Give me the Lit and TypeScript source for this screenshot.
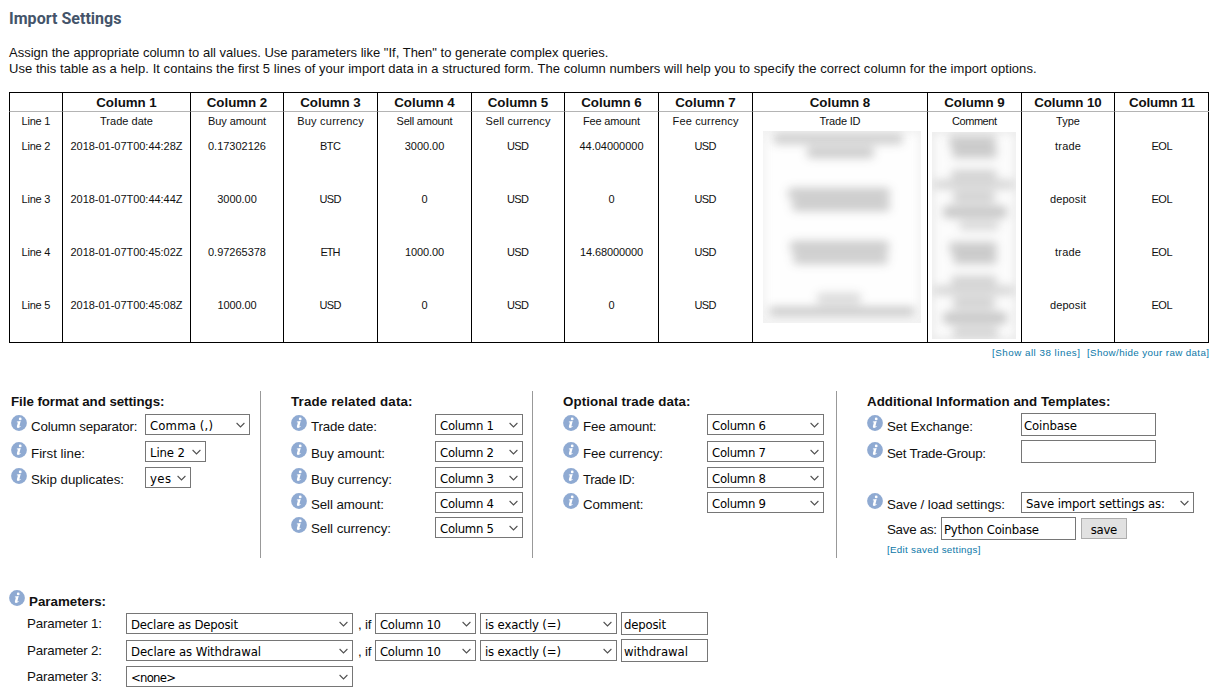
import { LitElement, html, css, svg } from "lit";
import { customElement, property, state } from "lit/decorators.js";
import { styleMap } from "lit/directives/style-map.js";

/* Single line of text tracked so that it occupies a given width. */
@customElement("fit-text")
class FitText extends LitElement {
  static styles = css`
    :host { display: inline-block; white-space: pre; flex: none; }
    .t { display: inline-block; }
  `;
  @property() text = "";
  @property({ type: Number }) w = 0;
  @state() spacing = 0;

  firstUpdated() {
    const span = this.renderRoot.querySelector(".t") as HTMLElement;
    const natural = span.getBoundingClientRect().width;
    if (this.w && this.text.length > 1) {
      this.spacing = (this.w + 1 - natural) / (this.text.length - 1);
    }
  }

  render() {
    const s = this.spacing.toFixed(3);
    return html`<span class="t" style=${styleMap({ letterSpacing: `${s}px`, marginRight: `${-Number(s)}px` })}>${this.text}</span>`;
  }
}

const t = (text: string, w: number) => html`<fit-text .text=${text} .w=${w}></fit-text>`;

@customElement("info-icon")
class InfoIcon extends LitElement {
  static styles = css`
    :host { display: block; width: 16px; height: 16px; flex: none; }
    svg { display: block; }
  `;
  render() {
    return html`<svg width="16" height="16" viewBox="0 0 16 16">
      <circle cx="8" cy="8" r="7.9" fill="#8faad2" />
      <circle cx="9.2" cy="3.9" r="1.4" fill="#fff" />
      <path d="M5.9 6.5 L9.7 6 L8.4 11.2 Q8.3 11.8 9.5 11.1 L9.8 11.6 Q8.3 13.1 7 13 Q5.5 12.8 5.9 11.2 L6.9 7.4 L5.8 7.2 Z" fill="#fff" />
    </svg>`;
  }
}

@customElement("select-box")
class SelectBox extends LitElement {
  static styles = css`
    :host { display: block; flex: none; }
    .box {
      box-sizing: border-box; height: 21px; border: 1px solid #767676; background: #fff;
      display: flex; justify-content: space-between; padding: 0 4px 0 4px;
      font: 13px/21px "DejaVu Sans Condensed", "DejaVu Sans", sans-serif; font-stretch: condensed; color: #000;
    }
    svg { display: block; margin-top: 7px; flex: none; }
  `;
  @property({ type: Number }) width = 100;
  @property() text = "";
  @property({ type: Number }) tw = 0;
  render() {
    return html`<div class="box" style=${styleMap({ width: `${this.width}px` })}>
      ${t(this.text, this.tw)}
      <svg width="9" height="7" viewBox="0 0 9 7"><path d="M0.6 1 L4.5 4.9 L8.4 1" fill="none" stroke="#505050" stroke-width="1.1" /></svg>
    </div>`;
  }
}

@customElement("text-box")
class TextBox extends LitElement {
  static styles = css`
    :host { display: block; flex: none; }
    .box {
      box-sizing: border-box; height: 23px; border: 1px solid #767676; background: #fff; padding-left: 2px;
      font: 13px/23px "DejaVu Sans Condensed", "DejaVu Sans", sans-serif; font-stretch: condensed; color: #000;
    }
  `;
  @property({ type: Number }) width = 100;
  @property() text = "";
  @property({ type: Number }) tw = 0;
  render() {
    return html`<div class="box" style=${styleMap({ width: `${this.width}px` })}>${this.text ? t(this.text, this.tw) : ""}</div>`;
  }
}

const sel = (text: string, tw: number, width: number) =>
  html`<select-box .text=${text} .tw=${tw} .width=${width}></select-box>`;
const inp = (text: string, tw: number, width: number) =>
  html`<text-box .text=${text} .tw=${tw} .width=${width}></text-box>`;

type Cell = [string, number];
const heads: Cell[] = [["", 0], ...Array.from({ length: 11 }, (_, i) => [`Column ${i + 1}`, i < 9 ? 59.5 : i === 9 ? 66.5 : 65] as Cell)];
const date = 111, eol: Cell = ["EOL", 20], usd: Cell = ["USD", 21], none: Cell = ["", 0], zero: Cell = ["0", 6];
const rows: Cell[][] = [
  [["Line 1", 28], ["Trade date", 52], ["Buy amount", 57], ["Buy currency", 65.5], ["Sell amount", 55], ["Sell currency", 64], ["Fee amount", 56], ["Fee currency", 65], ["Trade ID", 40], ["Comment", 44], ["Type", 23], none],
  [["Line 2", 28], ["2018-01-07T00:44:28Z", date], ["0.17302126", 57], ["BTC", 20], ["3000.00", 38.5], usd, ["44.04000000", 63], usd, none, none, ["trade", 25], eol],
  [["Line 3", 28], ["2018-01-07T00:44:44Z", date], ["3000.00", 38.5], usd, zero, usd, zero, usd, none, none, ["deposit", 35], eol],
  [["Line 4", 28], ["2018-01-07T00:45:02Z", date], ["0.97265378", 57], ["ETH", 19], ["1000.00", 38], usd, ["14.68000000", 62], usd, none, none, ["trade", 25], eol],
  [["Line 5", 28], ["2018-01-07T00:45:08Z", date], ["1000.00", 38], usd, zero, usd, zero, usd, none, none, ["deposit", 35], eol],
];

/* Redacted bars: x, y, width, height, opacity. */
const idBars = [[10, 3, 130, 10, .22], [44, 16, 67, 11, .23], [25, 57, 102, 11, .23], [29, 69, 98, 11, .23], [27, 110, 99, 11, .23], [30, 122, 95, 11, .22], [54, 162, 44, 11, .16], [6, 176, 146, 9, .25]];
const noteBars = [[17, 4, 47, 11, .22], [20, 15, 45, 11, .22], [19, 38, 46, 9, .2], [2, 48, 80, 9, .18], [21, 59, 42, 12, .19], [11, 74, 64, 12, .24], [27, 89, 40, 9, .17], [17, 110, 48, 11, .22], [21, 121, 44, 11, .22], [19, 144, 46, 9, .2], [2, 154, 80, 9, .18], [21, 165, 42, 12, .19], [11, 180, 64, 12, .24], [21, 195, 45, 10, .19]];
const bars = (list: number[][]) => list.map(([x, y, w, h, o]) => svg`<rect x=${x} y=${y} width=${w} height=${h} rx="4" fill="#222" opacity=${o} />`);

@customElement("app-root")
class AppRoot extends LitElement {
  static styles = css`
    :host { display: block; width: 1220px; height: 700px; overflow: hidden; background: #fff; color: #111;
      font: 13.33px/16px "Liberation Sans", Arial, sans-serif; }
    * { box-sizing: border-box; }
    .page { padding: 9px 0 0 9px; width: 1220px; }
    h1 { margin: 0; font: bold 16px/19px Roboto, sans-serif; color: #44546a; }
    .intro { margin-top: 17px; font-size: 13px; }
    .intro div { height: 16px; }
    .table { margin-top: 15px; width: 1200px; height: 251px; display: grid;
      grid-template-columns: 53px 128px 93px 94px 94px 93px 94px 94px 175px 94px 93px 95px;
      grid-template-rows: 19px 19px 53px 53px 53px 52px; border: 1px solid #000; border-left: 0; font-size: 11px; line-height: 13px; }
    .cell { border-left: 1px solid #000; text-align: center; padding-top: 9px; }
    .cell.first { padding-top: 3px; }
    .cell.head { padding-top: 1px; font: bold 13.33px/17px "Liberation Sans", Arial, sans-serif; border-bottom: 1px solid #b4b4b4; }
    .c1 { grid-column: 1; } .c2 { grid-column: 2; } .c3 { grid-column: 3; } .c4 { grid-column: 4; }
    .c5 { grid-column: 5; } .c6 { grid-column: 6; } .c7 { grid-column: 7; } .c8 { grid-column: 8; }
    .c9 { grid-column: 9; } .c10 { grid-column: 10; } .c11 { grid-column: 11; } .c12 { grid-column: 12; }
    .g1 { grid-row: 1; } .g2 { grid-row: 2; } .g3 { grid-row: 3; } .g4 { grid-row: 4; } .g5 { grid-row: 5; } .g6 { grid-row: 6; }
    .mask { display: block; align-self: start; }
    .mask.id { grid-area: 3 / 9 / 7 / 10; margin-left: 11px; }
    .mask.note { grid-area: 3 / 10 / 7 / 11; margin: 1px 0 0 5px; }
    .links { display: flex; justify-content: flex-end; gap: 7px; width: 1200px; margin-top: 4px; height: 12px; }
    .link { font-size: 9.8px; line-height: 12px; color: #0b78a8; }
    .panels { display: flex; margin-top: 32px; height: 167px; }
    .panel { border-right: 1px solid #999; padding: 2px 0 0 2px; width: 252px; }
    .panel.b { width: 272px; padding-left: 30px; }
    .panel.c { width: 304px; padding-left: 30px; }
    .panel.d { width: 372px; padding-left: 30px; border: 0; }
    .title { font-weight: bold; height: 21px; padding-top: 1px; }
    .row { display: flex; align-items: flex-start; height: 26px; }
    .row.r0 { height: 27px; }
    .row.r2, .row.r3 { height: 25px; }
    .row info-icon { margin-top: 1px; }
    .row.r4 info-icon { margin-top: 0; }
    .label { width: 114px; margin: 5px 0 0 4px; }
    .r4 .label { margin-top: 4px; }
    .b .label, .c .label { width: 124px; }
    .d .label { width: 134px; }
    .row text-box { margin-top: -1px; }
    .gap { height: 25px; }
    .saveas { display: flex; padding-left: 20px; height: 25px; }
    .saveas .cap { width: 54px; padding-top: 5px; }
    .saveas text-box { margin-right: 5px; }
    button { display: block; margin: 1px 0 0; padding: 0; width: 46px; height: 21px; border: 1px solid #adadad; background: #e1e1e1; color: #000;
      font: 13px/19px "DejaVu Sans Condensed", "DejaVu Sans", sans-serif; font-stretch: condensed; }
    button fit-text { padding-top: 1px; }
    .edit { padding: 2px 0 0 20px; height: 14px; }
    .ptitle { display: flex; gap: 4px; margin-top: 32px; height: 22px; font-weight: bold; }
    .ptitle fit-text { margin-top: 4px; }
    .prow { display: flex; align-items: flex-start; height: 27px; padding-left: 18px; }
    .prow.p1 { height: 26px; }
    .prow .name { width: 99px; margin-top: 4px; }
    .prow select-box { margin-top: 1px; }
    .iff { width: 22px; padding: 5px 0 0 5px; }
    .sp { width: 4px; }
  `;

  row(i: number, label: string, lw: number, control: unknown) {
    return html`<div class="row r${i}"><info-icon></info-icon><div class="label">${t(label, lw)}</div>${control}</div>`;
  }

  param(i: number, action: string, aw: number, value = "", vw = 0) {
    return html`<div class="prow p${i}">
      <div class="name">${t(`Parameter ${i + 1}:`, 74)}</div>${sel(action, aw, 227)}
      ${value ? html`<div class="iff">${t(", if", 12.5)}</div>${sel("Column 10", 60, 101)}<div class="sp"></div>
        ${sel("is exactly (=)", 75, 137)}<div class="sp"></div>${inp(value, vw, 87)}` : ""}
    </div>`;
  }

  render() {
    return html`<div class="page">
      <h1>${t("Import Settings", 111.5)}</h1>
      <div class="intro">
        <div>${t('Assign the appropriate column to all values. Use parameters like "If, Then" to generate complex queries.', 598.5)}</div>
        <div>${t("Use this table as a help. It contains the first 5 lines of your import data in a structured form. The column numbers will help you to specify the correct column for the import options.", 1026.5)}</div>
      </div>
      <div class="table">
        ${heads.map(([s, w], c) => html`<div class="cell head g1 c${c + 1}">${s ? t(s, w) : ""}</div>`)}
        ${rows.map((r, i) => r.map(([s, w], c) => html`<div class="cell ${i === 0 ? "first" : ""} g${i + 2} c${c + 1}">${s ? t(s, w) : ""}</div>`))}
        <svg class="mask id" width="158" height="192">
          <defs>
            <filter id="b1" x="-20%" y="-20%" width="140%" height="140%" color-interpolation-filters="sRGB"><feGaussianBlur stdDeviation="5" /></filter>
          </defs>
          <rect width="158" height="192" fill="#fefefe" />
          <rect x="-2" y="-2" width="162" height="196" fill="none" stroke="#888" stroke-width="6" opacity=".16" filter="url(#b1)" />
          <g filter="url(#b1)">${bars(idBars)}</g>
        </svg>
        <svg class="mask note" width="84" height="207">
          <defs>
            <filter id="b2" x="-20%" y="-20%" width="140%" height="140%" color-interpolation-filters="sRGB"><feGaussianBlur stdDeviation="5" /></filter>
          </defs>
          <rect width="84" height="207" fill="#fcfcfc" />
          <rect x="-2" y="-2" width="88" height="211" fill="none" stroke="#888" stroke-width="6" opacity=".2" filter="url(#b2)" />
          <g filter="url(#b2)">${bars(noteBars)}</g>
        </svg>
      </div>
      <div class="links"><span class="link">${t("[Show all 38 lines]", 87)}</span><span class="link">${t("[Show/hide your raw data]", 121)}</span></div>
      <div class="panels">
        <div class="panel a">
          <div class="title">${t("File format and settings:", 152.5)}</div>
          ${this.row(0, "Column separator:", 105.5, sel("Comma (,)", 62, 105))}
          ${this.row(1, "First line:", 53, sel("Line 2", 34, 61))}
          ${this.row(2, "Skip duplicates:", 92, sel("yes", 20, 46))}
        </div>
        <div class="panel b">
          <div class="title">${t("Trade related data:", 120.5)}</div>
          ${this.row(0, "Trade date:", 65, sel("Column 1", 53, 88))}
          ${this.row(1, "Buy amount:", 73, sel("Column 2", 53, 88))}
          ${this.row(2, "Buy currency:", 80, sel("Column 3", 53, 88))}
          ${this.row(3, "Sell amount:", 72, sel("Column 4", 53, 88))}
          ${this.row(4, "Sell currency:", 79, sel("Column 5", 53, 88))}
        </div>
        <div class="panel c">
          <div class="title">${t("Optional trade data:", 126.5)}</div>
          ${this.row(0, "Fee amount:", 72.5, sel("Column 6", 53, 117))}
          ${this.row(1, "Fee currency:", 79, sel("Column 7", 53, 117))}
          ${this.row(2, "Trade ID:", 51, sel("Column 8", 53, 117))}
          ${this.row(3, "Comment:", 59.5, sel("Column 9", 53, 117))}
        </div>
        <div class="panel d">
          <div class="title">${t("Additional Information and Templates:", 242.5)}</div>
          ${this.row(0, "Set Exchange:", 85, inp("Coinbase", 52, 135))}
          ${this.row(1, "Set Trade-Group:", 98, inp("", 0, 135))}
          <div class="gap"></div>
          ${this.row(3, "Save / load settings:", 117, sel("Save import settings as:", 138, 173))}
          <div class="saveas"><div class="cap">${t("Save as:", 49)}</div>${inp("Python Coinbase", 94, 135)}<button>${t("save", 25.5)}</button></div>
          <div class="edit link">${t("[Edit saved settings]", 92.5)}</div>
        </div>
      </div>
      <div class="ptitle"><info-icon></info-icon>${t("Parameters:", 76)}</div>
      ${this.param(0, "Declare as Deposit", 106, "deposit", 41)}
      ${this.param(1, "Declare as Withdrawal", 129, "withdrawal", 63)}
      ${this.param(2, "<none>", 44)}
    </div>`;
  }
}
